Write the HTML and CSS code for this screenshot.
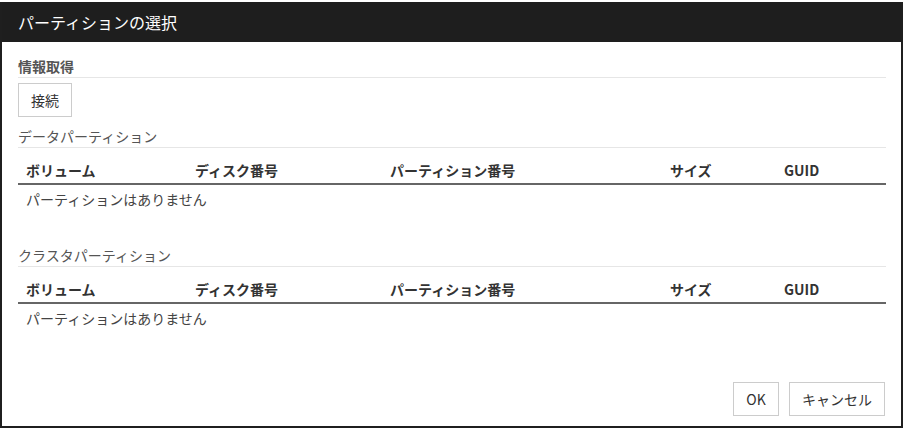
FILE: index.html
```html
<!DOCTYPE html>
<html lang="ja">
<head>
<meta charset="utf-8">
<title>パーティションの選択</title>
<link rel="stylesheet" href="styles.css">
</head>
<body>
<div class="dialog">
  <div class="titlebar">パーティションの選択</div>
  <div class="content">
    <h3 class="section bold">情報取得</h3>
    <button class="btn connect">接続</button>

    <h3 class="section">データパーティション</h3>
    <table class="grid">
      <thead>
        <tr><th class="c1">ボリューム</th><th class="c2">ディスク番号</th><th class="c3">パーティション番号</th><th class="c4">サイズ</th><th class="c5">GUID</th></tr>
      </thead>
      <tbody>
        <tr><td colspan="5">パーティションはありません</td></tr>
      </tbody>
    </table>

    <h3 class="section gap">クラスタパーティション</h3>
    <table class="grid">
      <thead>
        <tr><th class="c1">ボリューム</th><th class="c2">ディスク番号</th><th class="c3">パーティション番号</th><th class="c4">サイズ</th><th class="c5">GUID</th></tr>
      </thead>
      <tbody>
        <tr><td colspan="5">パーティションはありません</td></tr>
      </tbody>
    </table>

    <div class="footer">
      <button class="btn ok">OK</button>
      <button class="btn cancel">キャンセル</button>
    </div>
  </div>
</div>
</body>
</html>
```
FILE: styles.css
```css
* { box-sizing: border-box; }
html, body { margin: 0; padding: 0; background: #fff; }
body {
  font-family: "Noto Sans CJK JP", "Noto Sans", sans-serif;
  font-size: 14px;
  color: #333;
}
.dialog {
  width: 903px;
  height: 426px;
  margin-top: 2px;
  border: 2px solid #1f1f1f;
  border-top: 0;
  display: flex;
  flex-direction: column;
}
.titlebar {
  height: 40px;
  background: #1e1e1e;
  color: #fff;
  font-size: 16px;
  line-height: 40px;
  padding-left: 16px;
  flex: none;
}
.content {
  flex: 1;
  display: flex;
  flex-direction: column;
  padding: 15px 15px 10px 16px;
}
.section {
  margin: 0;
  font-size: 14px;
  font-weight: normal;
  line-height: 18px;
  color: #555;
  padding-bottom: 2px;
  border-bottom: 1px solid #e6e6e6;
}
.section.bold { font-weight: bold; color: #555; }
.btn {
  font-family: "Noto Sans CJK JP", "Noto Sans", sans-serif;
  font-size: 14px;
  color: #333;
  background: #fff;
  border: 1px solid #cccccc;
  height: 34px;
  padding: 0 12px;
  cursor: pointer;
}
.connect {
  align-self: flex-start;
  margin-top: 5px;
  width: 54px;
  padding: 0;
}
.connect + .section { margin-top: 10px; }
.section.gap { margin-top: 33px; }
.grid {
  width: 100%;
  border-collapse: collapse;
  margin-top: 6px;
  table-layout: fixed;
}
.grid th {
  text-align: left;
  font-weight: bold;
  color: #333;
  line-height: 18px;
  padding: 7px 8px 4px;
  border-bottom: 2px solid #666;
}
.grid td {
  line-height: 18px;
  padding: 5px 8px 5px;
  color: #444;
}
.c1 { width: 169px; }
.c2 { width: 195px; }
.c3 { width: 280px; }
.c4 { width: 114px; }
.footer {
  margin-top: auto;
  display: flex;
  justify-content: flex-end;
  gap: 10px;
  padding-right: 1px;
}
.ok { width: 46px; padding: 0; }
.cancel { width: 96px; padding: 0; }
```
